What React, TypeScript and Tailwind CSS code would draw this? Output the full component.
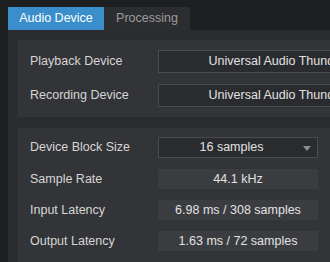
export default function App() {
  return (
    <div
      className="w-[330px] h-[262px] overflow-hidden bg-[#1e1f21] text-[12.5px] text-[#d6d6d6]"
      style={{ fontFamily: '"Liberation Sans", Arial, sans-serif' }}
    >
      {/* Tabs */}
      <div className="flex pl-2 pt-[7px] h-[30px]">
        <div className="w-[96px] flex items-center justify-center bg-[#3a8ecb] text-white">Audio Device</div>
        <div className="w-[86px] flex items-center justify-center bg-[#2c2d30] text-[#9c9c9c]">Processing</div>
      </div>

      {/* Panel */}
      <div className="ml-2 h-[232px] bg-[#2b2c2f] pt-[10px] pl-[10px] flex flex-col gap-[11px]">
        {/* Devices */}
        <div className="w-[420px] shrink-0 bg-[#333437] pl-3 py-[10px] flex flex-col gap-[11px]">
          {["Playback Device", "Recording Device"].map((label) => (
            <div key={label} className="flex items-center">
              <div className="w-[128px]">{label}</div>
              <div className="w-[258px] h-[23px] border border-[#4a4b4f] bg-[#2a2b2e] flex items-center justify-center text-[#e2e2e2] whitespace-nowrap">
                Universal Audio Thunderbolt
              </div>
            </div>
          ))}
        </div>

        {/* Buffer / latency */}
        <div className="flex-1 bg-[#333437] pl-3 pt-[9px] flex flex-col">
          <div className="flex items-center">
            <div className="w-[128px]">Device Block Size</div>
            <div className="relative w-[160px] h-[21px] border border-[#4a4b4f] bg-[#2a2b2e] flex items-center justify-center pr-[13px] text-[#e2e2e2]">
              16 samples
              <svg className="absolute right-[6px] top-[8px]" width="8" height="5" viewBox="0 0 8 5">
                <path d="M0 0 H8 L4 5 Z" fill="#8c8c8e" />
              </svg>
            </div>
          </div>
          {[
            ["Sample Rate", "44.1 kHz"],
            ["Input Latency", "6.98 ms / 308 samples"],
            ["Output Latency", "1.63 ms / 72 samples"],
          ].map(([label, value], i) => (
            <div key={label} className={`flex items-center ${i === 0 ? "mt-[11px]" : "mt-[11px]"}`}>
              <div className="w-[128px]">{label}</div>
              <div className="w-[160px] h-[20px] bg-[#3b3c40] flex items-center justify-center text-[#e2e2e2]">
                {value}
              </div>
            </div>
          ))}
        </div>
      </div>
    </div>
  );
}
